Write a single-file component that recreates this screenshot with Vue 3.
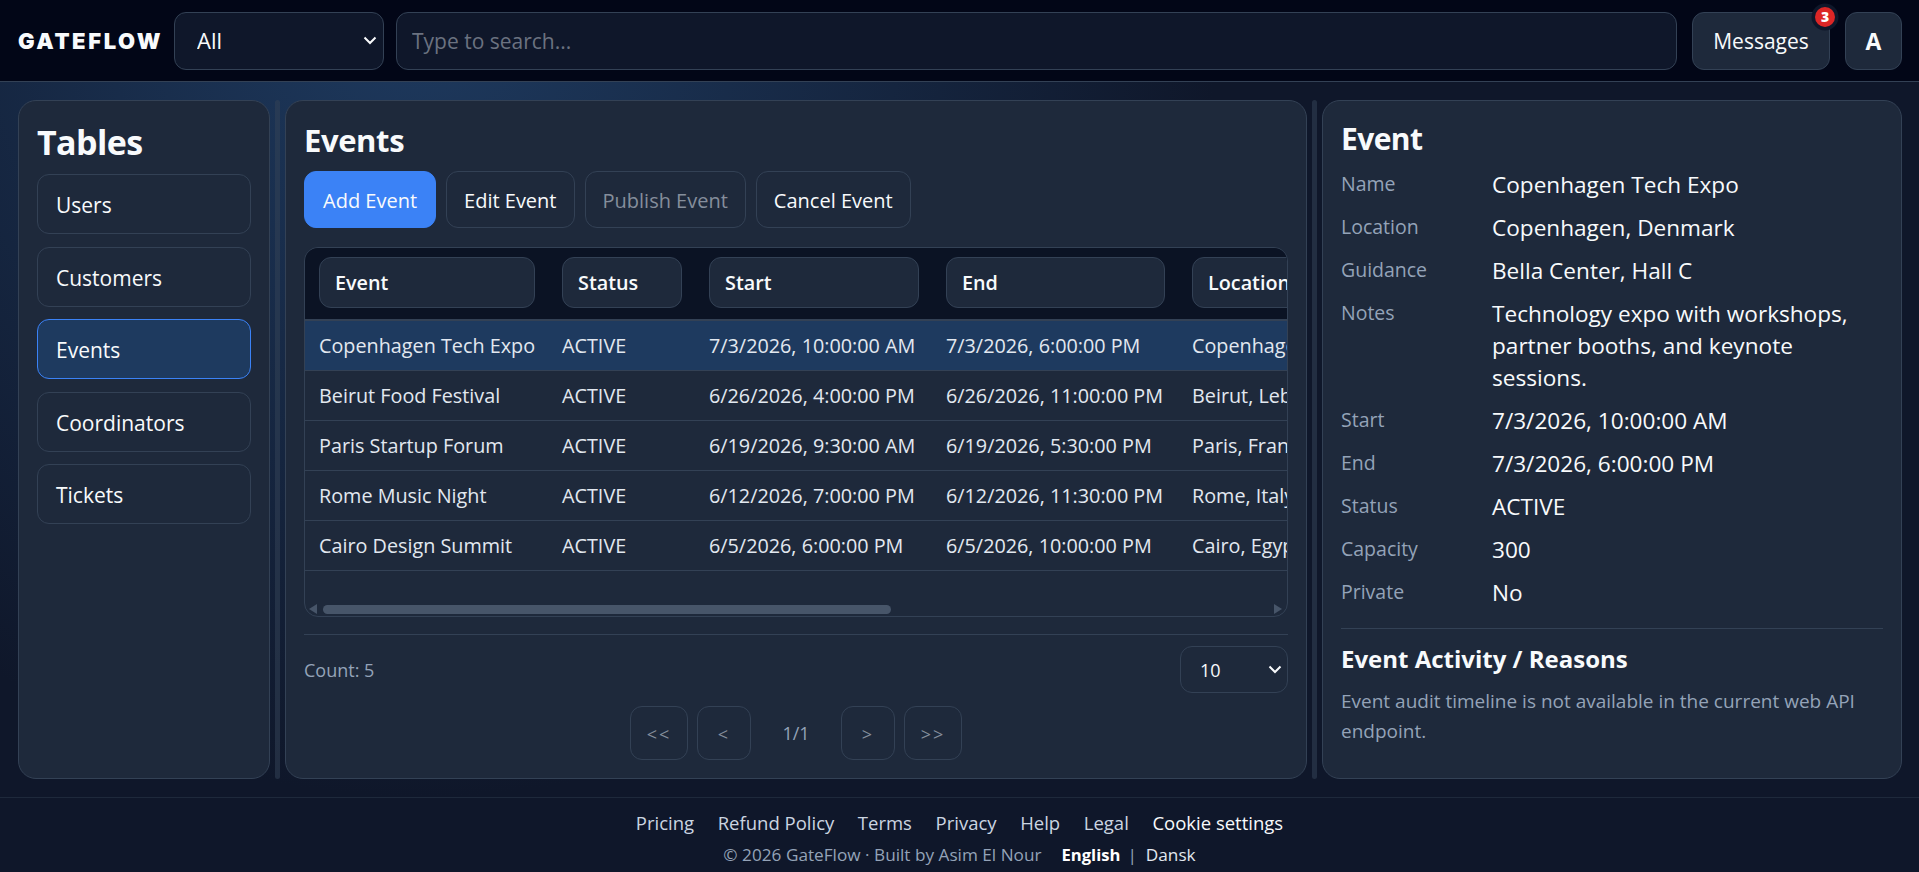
<script setup>
import { ref } from 'vue'

const tables = ['Users', 'Customers', 'Events', 'Coordinators', 'Tickets']
const activeTable = ref('Events')
const selectedRow = ref(0)

const events = [
  { name: 'Copenhagen Tech Expo', start: '7/3/2026, 10:00:00 AM', end: '7/3/2026, 6:00:00 PM', location: 'Copenhagen, Denmark' },
  { name: 'Beirut Food Festival', start: '6/26/2026, 4:00:00 PM', end: '6/26/2026, 11:00:00 PM', location: 'Beirut, Lebanon' },
  { name: 'Paris Startup Forum', start: '6/19/2026, 9:30:00 AM', end: '6/19/2026, 5:30:00 PM', location: 'Paris, France' },
  { name: 'Rome Music Night', start: '6/12/2026, 7:00:00 PM', end: '6/12/2026, 11:30:00 PM', location: 'Rome, Italy' },
  { name: 'Cairo Design Summit', start: '6/5/2026, 6:00:00 PM', end: '6/5/2026, 10:00:00 PM', location: 'Cairo, Egypt' },
]

const details = [
  ['Name', 'Copenhagen Tech Expo'],
  ['Location', 'Copenhagen, Denmark'],
  ['Guidance', 'Bella Center, Hall C'],
  ['Notes', 'Technology expo with workshops, partner booths, and keynote sessions.'],
  ['Start', '7/3/2026, 10:00:00 AM'],
  ['End', '7/3/2026, 6:00:00 PM'],
  ['Status', 'ACTIVE'],
  ['Capacity', '300'],
  ['Private', 'No'],
]

const footerLinks = ['Pricing', 'Refund Policy', 'Terms', 'Privacy', 'Help', 'Legal']
</script>

<template>
  <div class="app">
    <header class="topbar">
      <div class="logo">GATEFLOW</div>
      <div class="select-wrap scope-wrap">
        <select class="scope">
          <option>All</option>
        </select>
        <svg class="chevron" viewBox="0 0 14 9" width="14" height="9"><path d="M1.5 1.5 7 7l5.5-5.5" /></svg>
      </div>
      <input class="search" type="text" placeholder="Type to search..." />
      <button class="top-btn messages">
        Messages
        <span class="badge">3</span>
      </button>
      <button class="top-btn avatar">A</button>
    </header>

    <main class="workspace">
      <aside class="panel sidebar">
        <h2 class="sidebar-title">Tables</h2>
        <button
          v-for="t in tables"
          :key="t"
          class="nav-item"
          :class="{ active: t === activeTable }"
          @click="activeTable = t"
        >
          {{ t }}
        </button>
      </aside>

      <div class="splitter"></div>

      <section class="panel center">
        <h2 class="center-title">Events</h2>
        <div class="actions">
          <button class="btn primary">Add Event</button>
          <button class="btn">Edit Event</button>
          <button class="btn disabled">Publish Event</button>
          <button class="btn">Cancel Event</button>
        </div>

        <div class="table-wrap">
          <table class="grid">
            <colgroup>
              <col class="c-event" />
              <col class="c-status" />
              <col class="c-start" />
              <col class="c-end" />
              <col class="c-loc" />
            </colgroup>
            <thead>
              <tr>
                <th><button class="th-btn">Event</button></th>
                <th><button class="th-btn">Status</button></th>
                <th><button class="th-btn">Start</button></th>
                <th><button class="th-btn">End</button></th>
                <th><button class="th-btn">Location</button></th>
              </tr>
            </thead>
            <tbody>
              <tr
                v-for="(e, i) in events"
                :key="e.name"
                :class="{ selected: i === selectedRow }"
                @click="selectedRow = i"
              >
                <td>{{ e.name }}</td>
                <td>ACTIVE</td>
                <td>{{ e.start }}</td>
                <td>{{ e.end }}</td>
                <td>{{ e.location }}</td>
              </tr>
            </tbody>
          </table>
          <div class="scroll-arrow left"></div>
          <div class="scroll-thumb"></div>
          <div class="scroll-arrow right"></div>
        </div>

        <div class="table-foot">
          <span class="count">Count: 5</span>
          <div class="select-wrap size-wrap">
            <select class="page-size">
              <option>10</option>
            </select>
            <svg class="chevron" viewBox="0 0 14 9" width="14" height="9"><path d="M1.5 1.5 7 7l5.5-5.5" /></svg>
          </div>
        </div>
        <div class="pager">
          <button class="page-btn wide">&lt;&lt;</button>
          <button class="page-btn">&lt;</button>
          <span class="page-num">1/1</span>
          <button class="page-btn">&gt;</button>
          <button class="page-btn wide">&gt;&gt;</button>
        </div>
      </section>

      <div class="splitter"></div>

      <section class="panel detail">
        <h2 class="detail-title">Event</h2>
        <div v-for="d in details" :key="d[0]" class="detail-row">
          <span class="detail-label">{{ d[0] }}</span>
          <span class="detail-value">{{ d[1] }}</span>
        </div>
        <hr class="detail-sep" />
        <h3 class="activity-title">Event Activity / Reasons</h3>
        <p class="activity-text">Event audit timeline is not available in the current web API endpoint.</p>
      </section>
    </main>

    <footer class="footer">
      <nav class="foot-links">
        <a v-for="l in footerLinks" :key="l">{{ l }}</a>
        <a class="bright">Cookie settings</a>
      </nav>
      <div class="foot-meta">
        <span>© 2026 GateFlow · Built by Asim El Nour</span>
        <span class="langs"><b>English</b><i>|</i><span class="lang">Dansk</span></span>
      </div>
    </footer>
  </div>
</template>

<style>
body {
  margin: 0;
  background: #0f172a;
}
</style>

<style scoped>
.app {
  height: 872px;
  display: flex;
  flex-direction: column;
  overflow: hidden;
  font-family: "Open Sans", "Noto Sans", sans-serif;
  color: #f8fafc;
  background: radial-gradient(circle at 22% 0%, #1e3a5f 0, #0f172a 46%);
  font-size: 20px;
}
button,
input,
select {
  font-family: inherit;
  color: inherit;
}

.topbar {
  height: 81px;
  box-sizing: content-box;
  flex: none;
  display: flex;
  align-items: center;
  padding: 0 17px 0 18px;
  background: #020617;
  border-bottom: 1px solid #334155;
}
.logo {
  width: 156px;
  flex: none;
  font-family: Inter, "Open Sans", sans-serif;
  font-size: 22px;
  font-weight: 900;
  letter-spacing: 2.6px;
  white-space: nowrap;
}
.select-wrap {
  position: relative;
  flex: none;
}
.chevron {
  position: absolute;
  top: 50%;
  right: 7px;
  margin-top: -5px;
  fill: none;
  stroke: #f8fafc;
  stroke-width: 2;
  pointer-events: none;
}
.scope-wrap {
  width: 210px;
}
.scope {
  width: 100%;
  height: 58px;
  padding: 0 22px 2px;
  appearance: none;
  background: #0f172a;
  border: 1px solid #334155;
  border-radius: 12px;
  font-size: 22px;
}
.search {
  flex: 1;
  min-width: 0;
  height: 58px;
  box-sizing: border-box;
  margin: 0 15px 0 12px;
  padding: 0 15px;
  background: #0f172a;
  border: 1px solid #334155;
  border-radius: 12px;
  font-size: 21px;
}
.search::placeholder {
  color: #6b7280;
}
.top-btn {
  position: relative;
  height: 58px;
  background: #1e293b;
  border: 1px solid #334155;
  border-radius: 12px;
  font-size: 21px;
}
.messages {
  width: 138px;
  margin-right: 15px;
  padding: 0;
}
.avatar {
  width: 57px;
  font-size: 23px;
  font-weight: 700;
}
.badge {
  position: absolute;
  top: -6px;
  right: -6px;
  width: 20px;
  height: 20px;
  border-radius: 50%;
  background: #dc2626;
  box-shadow: 0 0 0 3.5px #0f172a;
  font-size: 14px;
  font-weight: 800;
  line-height: 20px;
  text-align: center;
  color: #fff;
}

.workspace {
  flex: 1;
  min-height: 0;
  display: grid;
  grid-template-columns: 252px 15px 1022px 15px 1fr;
  padding: 18px 17px 18px 18px;
}
.panel {
  box-sizing: border-box;
  background: #1e293b;
  border: 1px solid #334155;
  border-radius: 18px;
  min-width: 0;
}
.splitter {
  width: 5px;
  justify-self: center;
  border-radius: 4px;
  background: rgba(51, 65, 85, 0.55);
}

.sidebar {
  padding: 18px;
  display: flex;
  flex-direction: column;
  gap: 12.4px;
}
.sidebar-title {
  margin: 0 0 -3px;
  font-size: 34px;
  line-height: 46px;
  font-weight: 700;
  letter-spacing: -0.6px;
}
.nav-item {
  height: 60px;
  flex: none;
  padding: 2px 18px 0;
  text-align: left;
  font-size: 21px;
  background: #1e293b;
  border: 1px solid #334155;
  border-radius: 12px;
}
.nav-item.active {
  background: #1e3a5f;
  border-color: #3b82f6;
}

.center {
  padding: 18px;
  display: flex;
  flex-direction: column;
}
.center-title {
  margin: 0;
  font-size: 31px;
  line-height: 42px;
  font-weight: 700;
  letter-spacing: -0.4px;
}
.actions {
  display: flex;
  gap: 10px;
  margin-top: 10px;
}
.btn {
  height: 57px;
  padding: 2px 17px 0;
  font-size: 20px;
  background: #1e293b;
  border: 1px solid #334155;
  border-radius: 12px;
}
.btn.primary {
  padding: 2px 18px 0;
  background: #3b82f6;
  border-color: #3b82f6;
}
.btn.disabled {
  color: #858e9c;
}

.table-wrap {
  position: relative;
  height: 370px;
  flex: none;
  box-sizing: border-box;
  margin-top: 19px;
  overflow: hidden;
  border: 1px solid #334155;
  border-radius: 14px;
}
.grid {
  table-layout: fixed;
  width: 1173px;
  border-collapse: collapse;
  font-size: 19.8px;
}
.c-event { width: 243px; }
.c-status { width: 147px; }
.c-start { width: 237px; }
.c-end { width: 246px; }
.c-loc { width: 300px; }
.grid thead tr {
  background: #0b1324;
  border-bottom: 2px solid #334155;
}
.grid th {
  height: 72px;
  padding: 0 0 2px 14px;
  box-sizing: border-box;
  text-align: left;
}
.th-btn {
  display: block;
  box-sizing: border-box;
  width: calc(100% - 13px);
  height: 51px;
  padding: 0 15px;
  text-align: left;
  background: #1e293b;
  border: 1px solid #334155;
  border-radius: 12px;
  font-size: 19.8px;
  font-weight: 600;
}
.grid td {
  height: 49px;
  padding: 0 0 0 14px;
  color: #e2e8f0;
  white-space: nowrap;
  border-bottom: 1px solid #334155;
}
.grid tr.selected td {
  background: #1e3a5f;
}
.scroll-thumb {
  position: absolute;
  left: 18px;
  bottom: 2px;
  width: 568px;
  height: 9px;
  border-radius: 5px;
  background: #475569;
}
.scroll-arrow {
  position: absolute;
  bottom: 2px;
  width: 0;
  height: 0;
  border-top: 5px solid transparent;
  border-bottom: 5px solid transparent;
}
.scroll-arrow.left {
  left: 4px;
  border-right: 8px solid #475569;
}
.scroll-arrow.right {
  right: 5px;
  border-left: 8px solid #475569;
}

.table-foot {
  margin-top: 17px;
  padding-top: 11px;
  border-top: 1px solid #334155;
  display: flex;
  align-items: center;
  justify-content: space-between;
}
.count {
  font-size: 18px;
  color: #94a3b8;
}
.size-wrap {
  width: 108px;
}
.size-wrap .chevron {
  right: 6px;
}
.page-size {
  width: 100%;
  height: 47px;
  padding: 0 19px;
  appearance: none;
  font-size: 18px;
  background: #1e293b;
  border: 1px solid #334155;
  border-radius: 12px;
}
.pager {
  margin-top: 13px;
  display: flex;
  justify-content: center;
  align-items: center;
  gap: 9px;
}
.page-btn {
  width: 54px;
  height: 54px;
  padding: 2px 0 0;
  font-size: 18px;
  color: #858e9c;
  background: transparent;
  border: 1px solid #334155;
  border-radius: 12px;
  letter-spacing: 2px;
}
.page-btn.wide {
  width: 58px;
}
.page-num {
  width: 72px;
  text-align: center;
  font-size: 18px;
  color: #94a3b8;
}

.detail {
  padding: 18px;
}
.detail-title {
  margin: 0 0 10px;
  font-size: 30px;
  line-height: 40px;
  font-weight: 700;
  letter-spacing: -0.6px;
}
.detail-row {
  display: grid;
  grid-template-columns: 151px 1fr;
  padding-bottom: 11px;
}
.detail-label {
  font-size: 19.5px;
  line-height: 29px;
  color: #94a3b8;
}
.detail-value {
  font-size: 22.6px;
  line-height: 32px;
}
.detail-sep {
  margin: 8px 0 15px;
  border: 0;
  border-top: 1px solid #334155;
}
.activity-title {
  margin: 0;
  font-size: 24px;
  line-height: 30px;
  font-weight: 700;
}
.activity-text {
  margin: 12px 0 0;
  font-size: 19px;
  line-height: 30px;
  color: #94a3b8;
}

.footer {
  flex: none;
  height: 75px;
  box-sizing: border-box;
  border-top: 1px solid #1e293b;
  background: #0f172a;
  padding-top: 12px;
  text-align: center;
}
.foot-links {
  display: flex;
  justify-content: center;
  gap: 23.6px;
  font-size: 18.5px;
  line-height: 26px;
  color: #cbd5e1;
}
.foot-links .bright {
  color: #f8fafc;
}
.foot-meta {
  margin-top: 6px;
  display: flex;
  justify-content: center;
  gap: 20px;
  font-size: 17.2px;
  line-height: 26px;
  color: #94a3b8;
}
.langs {
  display: inline-flex;
  gap: 9px;
  color: #e2e8f0;
}
.langs b {
  margin-right: -2px;
  font-size: 16.6px;
  color: #fff;
}
.langs i {
  font-style: normal;
  color: #94a3b8;
}
</style>
